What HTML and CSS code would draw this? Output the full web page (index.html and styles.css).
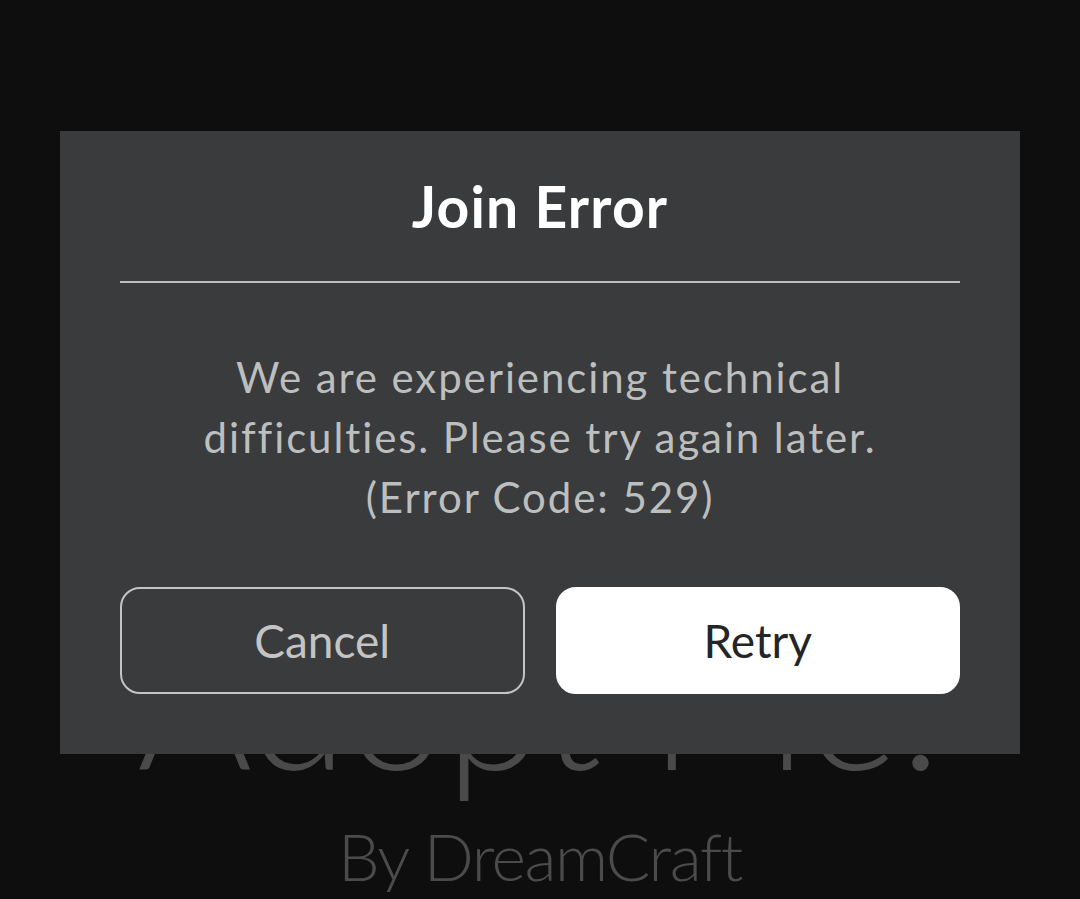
FILE: index.html
```html
<!DOCTYPE html>
<html lang="en">
<head>
  <meta charset="UTF-8" />
  <meta name="viewport" content="width=device-width, initial-scale=1.0" />
  <title>Join Error</title>
  <link rel="stylesheet" href="styles.css">
</head>
<body>
  <div class="backdrop">
    <div class="game-title">Adopt Me!</div>
    <div class="game-creator">By DreamCraft</div>
  </div>

  <div class="overlay">
    <div class="dialog">
      <div class="dialog-header">
        <h1>Join Error</h1>
      </div>
      <div class="divider"></div>
      <p class="message">
        We are experiencing technical<br>
        difficulties. Please try again later.<br>
        (Error Code: 529)
      </p>
      <div class="actions">
        <button class="btn btn-secondary">Cancel</button>
        <button class="btn btn-primary">Retry</button>
      </div>
    </div>
  </div>
</body>
</html>
```

FILE: styles.css
```css
body {
  font-family: Lato, "Open Sans", sans-serif;
  background-color: #0e0e0e;
  margin: 0;
  height: 899px;
  overflow: hidden;
  position: relative;
}
.backdrop {
  display: flex;
  flex-direction: column;
  align-items: center;
  padding-top: 614px;
}
.game-title {
  font-size: 176px;
  font-weight: 300;
  line-height: 1;
  color: #4a4a4a;
}
.game-creator {
  margin-top: 33px;
  font-size: 66px;
  font-weight: 300;
  letter-spacing: -1.5px;
  line-height: 1;
  color: #4b4b4b;
}
.overlay {
  position: absolute;
  top: 0;
  left: 0;
  right: 0;
  bottom: 0;
  display: flex;
  justify-content: center;
  padding-top: 131px;
}
.dialog {
  width: 960px;
  height: 623px;
  box-sizing: border-box;
  background: #393b3d;
  padding: 0 60px;
  display: flex;
  flex-direction: column;
}
.dialog-header {
  height: 150px;
  display: flex;
  align-items: center;
  justify-content: center;
}
h1 {
  margin: 0;
  font-size: 57px;
  font-weight: 700;
  letter-spacing: 1.2px;
  color: white;
}
.divider {
  height: 2px;
  background: #bdbdbd;
}
.message {
  margin: 0;
  padding-top: 64px;
  font-size: 42px;
  letter-spacing: 1.9px;
  line-height: 60px;
  text-align: center;
  color: #bdbebe;
}
.actions {
  margin-top: auto;
  margin-bottom: 60px;
  display: flex;
  gap: 31px;
}
.btn {
  flex: 1;
  height: 107px;
  border-radius: 20px;
  font-family: inherit;
  font-size: 46px;
  cursor: pointer;
}
.btn-secondary {
  background: transparent;
  border: 2px solid #c4c4c4;
  color: #c4c4c4;
}
.btn-primary {
  background: white;
  border: 2px solid white;
  color: #232527;
}
```
